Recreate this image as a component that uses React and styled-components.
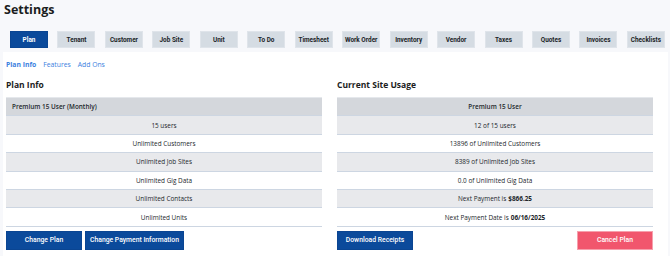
import React from 'react';
import styled, { createGlobalStyle } from 'styled-components';

const GlobalStyle = createGlobalStyle`
    html, body {
        margin: 0;
        padding: 0;
        background: #f7f8fb;
    }
    * {
        box-sizing: border-box;
    }
`;

const Page = styled.div`
    width: 670px;
    height: 256px;
    overflow: hidden;
    background: #f7f8fb;
    font-family: 'Open Sans', 'Noto Sans', sans-serif;
    color: #1f2329;
`;

const Title = styled.h1`
    margin: 0;
    padding: 1px 0 0 4px;
    height: 31px;
    font-size: 12.5px;
    font-weight: 700;
    color: #1b1d21;
`;

const TabBar = styled.div`
    display: flex;
    justify-content: space-between;
    padding: 0 5px 0 10px;
    height: 21px;
`;

const Tab = styled.div`
    width: 38px;
    height: 17px;
    display: flex;
    align-items: center;
    justify-content: center;
    font-family: Roboto, 'Liberation Sans', sans-serif;
    font-size: 6.4px;
    font-weight: 700;
    white-space: nowrap;
    background: ${(p) => (p.active ? '#0b4a9b' : '#d5dce3')};
    color: ${(p) => (p.active ? '#ffffff' : '#202428')};
    border: 1px solid ${(p) => (p.active ? '#0a4592' : '#dfe4ea')};
`;

const Card = styled.div`
    background: #ffffff;
    margin: 0 2px 0 3px;
    padding: 0 3px 0 3px;
    height: 204px;
`;

const SubNav = styled.div`
    display: flex;
    gap: 7px;
    height: 24px;
    align-items: center;
    padding-top: 1px;
    font-size: 6.8px;
`;

const SubLink = styled.span`
    color: #3c7fe0;
    font-weight: ${(p) => (p.active ? 700 : 400)};
`;

const Columns = styled.div`
    display: grid;
    grid-template-columns: 316px 316px;
    column-gap: 15px;
`;

const Column = styled.div`
    display: flex;
    flex-direction: column;
`;

const Heading = styled.h2`
    margin: 0;
    height: 21px;
    padding-bottom: 4px;
    display: flex;
    align-items: center;
    font-size: 8.5px;
    font-weight: 700;
    color: #1b1d21;
`;

const Table = styled.div`
    display: flex;
    flex-direction: column;
    border-bottom: 1px solid #cdd6e2;
`;

const Row = styled.div`
    height: 18.4px;
    display: flex;
    align-items: center;
    justify-content: ${(p) => (p.left ? 'flex-start' : 'center')};
    padding: 0 6px;
    font-size: 6.4px;
    font-weight: ${(p) => (p.head ? 600 : 400)};
    color: #22262b;
    background: ${(p) => (p.head ? '#d4d7dc' : p.shade ? '#e8e9ec' : '#ffffff')};
    border-top: 1px solid ${(p) => (p.head ? '#e5e8ec' : '#cdd6e2')};

    b {
        font-weight: 700;
        margin-left: 2px;
    }
`;

const Actions = styled.div`
    display: flex;
    justify-content: ${(p) => (p.spread ? 'space-between' : 'flex-start')};
    gap: 3px;
    margin-top: 4px;
`;

const Button = styled.button`
    height: 19px;
    min-width: 76px;
    padding: 0 4px;
    border: 1px solid ${(p) => (p.danger ? '#f6a0ad' : '#0a4592')};
    background: ${(p) => (p.danger ? '#f1566d' : '#0b4a9b')};
    color: #ffffff;
    font-family: Roboto, 'Liberation Sans', sans-serif;
    font-size: 6.8px;
    font-weight: 500;
    white-space: nowrap;
`;

const tabs = [
    'Plan', 'Tenant', 'Customer', 'Job Site', 'Unit', 'To Do', 'Timesheet',
    'Work Order', 'Inventory', 'Vendor', 'Taxes', 'Quotes', 'Invoices', 'Checklists',
];

const planRows = [
    '15 users',
    'Unlimited Customers',
    'Unlimited Job Sites',
    'Unlimited Gig Data',
    'Unlimited Contacts',
    'Unlimited Units',
];

const usageRows = [
    '12 of 15 users',
    '13896 of Unlimited Customers',
    '8389 of Unlimited Job Sites',
    '0.0 of Unlimited Gig Data',
    <>Next Payment is <b>$866.25</b></>,
    <>Next Payment Date is <b>06/16/2025</b></>,
];

export default function App() {
    return (
        <Page>
            <GlobalStyle />
            <Title>Settings</Title>
            <TabBar>
                {tabs.map((t) => (
                    <Tab key={t} active={t === 'Plan'}>{t}</Tab>
                ))}
            </TabBar>
            <Card>
                <SubNav>
                    <SubLink active>Plan Info</SubLink>
                    <SubLink>Features</SubLink>
                    <SubLink>Add Ons</SubLink>
                </SubNav>
                <Columns>
                    <Column>
                        <Heading>Plan Info</Heading>
                        <Table>
                            <Row head left>Premium 15 User (Monthly)</Row>
                            {planRows.map((r, i) => (
                                <Row key={i} shade={i % 2 === 0}>{r}</Row>
                            ))}
                        </Table>
                        <Actions>
                            <Button>Change Plan</Button>
                            <Button>Change Payment Information</Button>
                        </Actions>
                    </Column>
                    <Column>
                        <Heading>Current Site Usage</Heading>
                        <Table>
                            <Row head>Premium 15 User</Row>
                            {usageRows.map((r, i) => (
                                <Row key={i} shade={i % 2 === 0}>{r}</Row>
                            ))}
                        </Table>
                        <Actions spread>
                            <Button>Download Receipts</Button>
                            <Button danger>Cancel Plan</Button>
                        </Actions>
                    </Column>
                </Columns>
            </Card>
        </Page>
    );
}
